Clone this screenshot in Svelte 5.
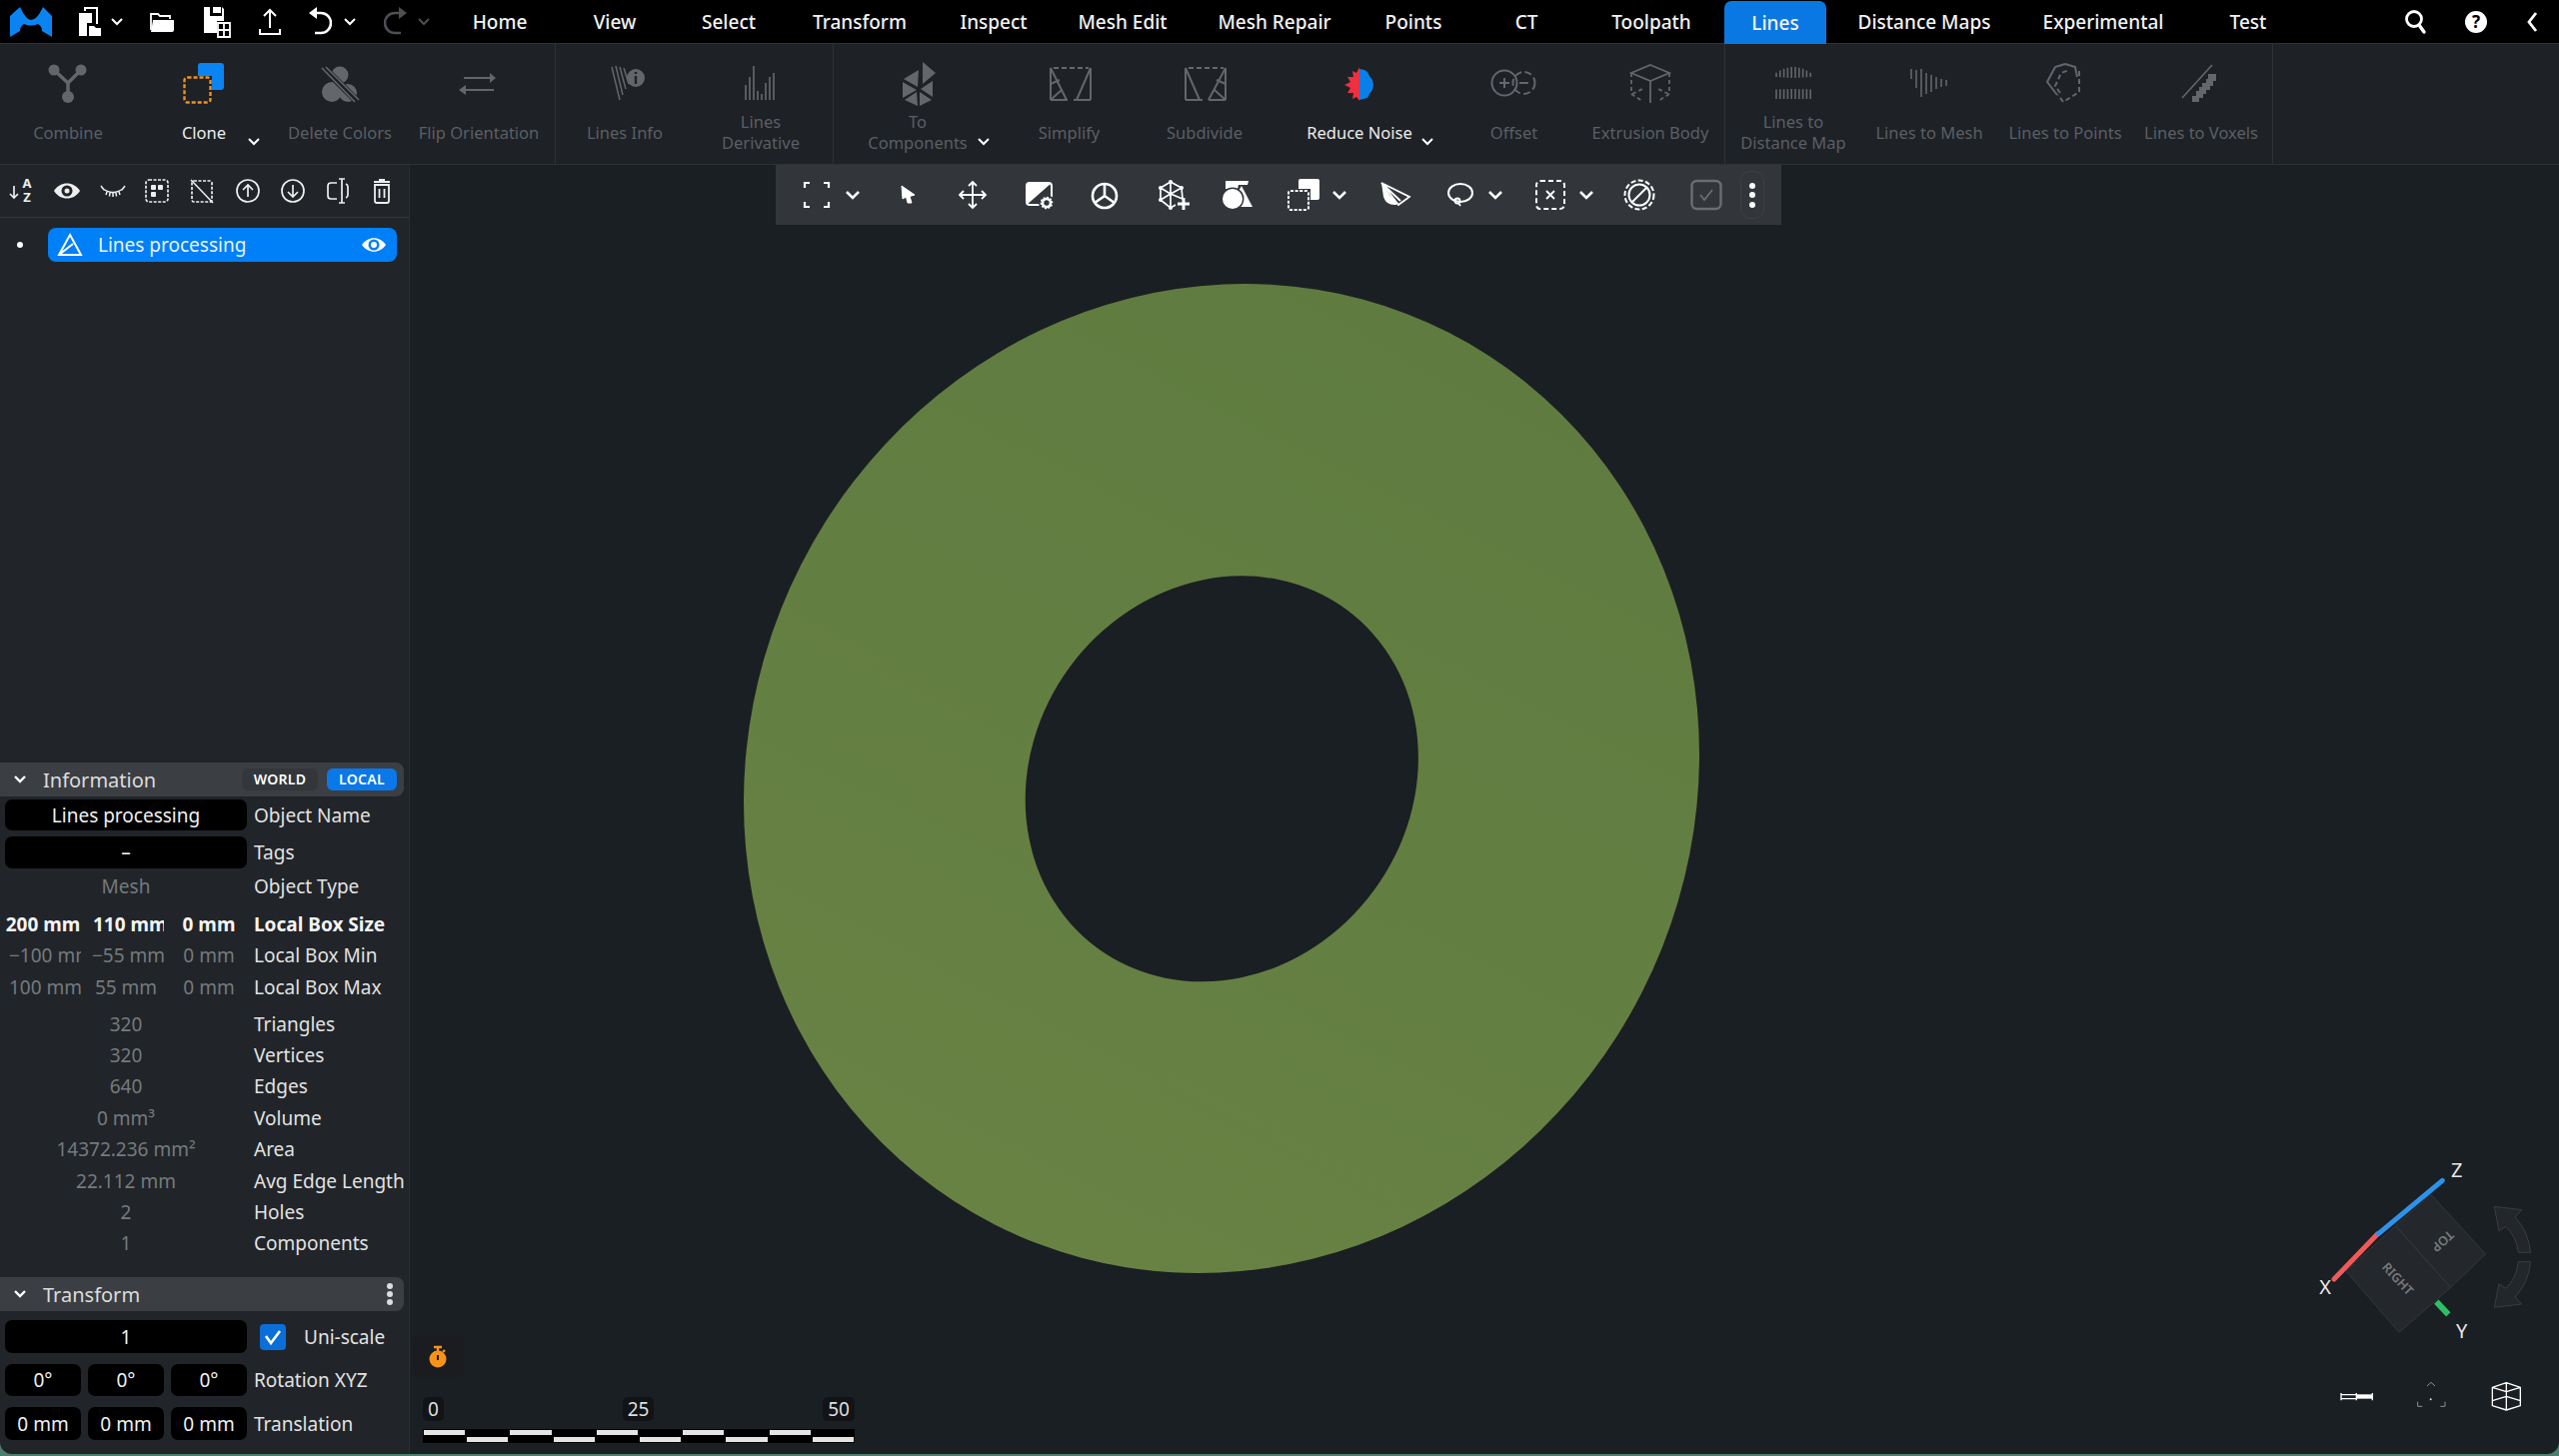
<script>
	// stroke helpers for the hand drawn icons
	const dim = 'stroke="currentColor" fill="none"';
	const distBars = Array.from({ length: 10 }, (_, i) => {
		const x = 7 + i * 3.8;
		const d = Math.abs(i - 4.5);
		return `M${x} ${8 + d * d * 0.28}V${19 - d * 0.2}M${x} ${30 + d * 0.1}V40`;
	}).join('');

	const ribbonIcons = {
		combine: `<path ${dim} stroke-width="3.5" d="M10 11L24 24L37 11M24 24V38"/><circle cx="10" cy="11" r="5.5" fill="currentColor"/><circle cx="37" cy="11" r="5.5" fill="currentColor"/><circle cx="24" cy="38" r="6" fill="currentColor"/>`,
		clone: `<rect x="18" y="4" width="26" height="27" rx="3" fill="#0a84f0"/><rect x="3" y="17" width="29" height="28" fill="#1e2126"/><rect x="4.5" y="18.5" width="26" height="25" rx="3" fill="none" stroke="#f0911e" stroke-width="2.4" stroke-dasharray="4 2"/>`,
		deleteColors: `<circle cx="24" cy="16" r="8.5" fill="currentColor"/><circle cx="16" cy="33" r="10" fill="currentColor"/><circle cx="32" cy="34" r="9" fill="currentColor"/><path stroke="#1e2126" stroke-width="7" d="M8 9L41 42"/><path ${dim} stroke-width="1.6" d="M6 9L39 43M10 8L43 41"/>`,
		flip: `<path ${dim} stroke-width="2" d="M9 19H36M39 31H11"/><path fill="currentColor" d="M35 14L41 19L35 24ZM11 26L4 31L11 36Z"/>`,
		linesInfo: `<path ${dim} stroke-width="1.5" d="M11 8L19 41M15 7L22 36M19 8L25 30M23 9L28 25"/><circle cx="35" cy="19" r="9" fill="currentColor"/><path stroke="#1e2126" stroke-width="2.4" d="M35 17V25M35 13V15"/>`,
		derivative: `<path ${dim} stroke-width="1.7" d="M9 26V41M13 18V41M17 7V41M21 32V41M25 35V41M29 24V41M33 18V41M37 14V41"/>`,
		toComponents: `<g transform="translate(2 0)"><path fill="currentColor" d="M27 3L40 14L27 25ZM23 11L22 28L8 20ZM7 23L21 31L7 39ZM21 33L22 47L9 41ZM24 33L36 41L24 47ZM37 38L25 30L37 22Z"/></g>`,
		simplify: `<path ${dim} stroke-width="2" d="M5 41V9M45 9V41M5 41H22M28 41H45M5 9L21 41M45 9L31 41M5 25L14 21M5 41L16 31"/><path ${dim} stroke-width="2" stroke-dasharray="5 3" d="M8 9H43"/>`,
		subdivide: `<path ${dim} stroke-width="2" d="M5 41V9M45 9V41M5 41H22M28 41H45M5 9L19 41M45 9L28 41M45 25L36 21M45 41L34 31"/><path ${dim} stroke-width="2" stroke-dasharray="5 3" d="M8 9H43"/>`,
		reduceNoise: `<path fill="#ee3040" d="M24 8L21 14L17 12L18 18L12 18L15 23L9 26L15 29L12 34L18 34L17 40L21 38L24 42Z"/><path fill="#0a7fe8" d="M24 10L29 11L32 13L34 17L37 21L38 26L37 31L34 35L32 39L28 40L24 41Z"/>`,
		offset: `<circle cx="14" cy="24" r="12.5" ${dim} stroke-width="2"/><path ${dim} stroke-width="2" d="M9 24H19M14 19V29M29 24H38"/><circle cx="33.5" cy="24" r="11" ${dim} stroke-width="2" stroke-dasharray="7 3.5"/>`,
		extrusion: `<path ${dim} stroke-width="1.8" d="M24 6L43 14L24 22L5 14ZM24 22V44"/><path ${dim} stroke-width="1.8" stroke-dasharray="4 3" d="M5 14V35L16 42M43 14V35L32 42M6 35L18 29M42 35L30 29"/>`,
		distMap: `<path ${dim} stroke-width="1.6" d="${distBars}"/>`,
		linesMesh: `<path ${dim} stroke-width="1.6" d="M6 10V20M11 11V29M16 10V38M21 14V35M26 16V33M31 18V30M36 20V28M41 21V27"/>`,
		linesPoints: `<path ${dim} stroke-width="2" d="M24 5L34 8L36 18M16 36L6 23L14 8L24 5"/><path ${dim} stroke-width="2" stroke-dasharray="5 3" d="M38 12V33L22 43L17 36M19 34L14 27L20 14L28 11"/>`,
		linesVoxels: `<path ${dim} stroke-width="1.6" d="M5 39L35 6"/><path fill="currentColor" d="M34 15h5v7h-3v5h-3v4h-4v4h-3v4h-4v4h-7v-6h4v-5h3v-4h3v-4h4v-4h2v-5h3z"/>`
	};

	const tools = {
		frame: `<path ${dim} stroke-width="2.2" d="M8 13V8H13M27 8H32V13M8 27V32H13M27 32H32V27"/>`,
		cursor: `<path fill="currentColor" stroke="currentColor" stroke-linejoin="round" d="M14 11L27 20L22 21.5L24 28L20 28L18.5 22L15 24Z"/>`,
		move: `<path ${dim} stroke-width="1.8" d="M20 7V33M7 20H33M16 11L20 7L24 11M16 29L20 33L24 29M11 16L7 20L11 24M29 16L33 20L29 24"/>`,
		matGear: `<rect x="8" y="8" width="25" height="22" rx="3" ${dim} stroke-width="2"/><path fill="currentColor" d="M8 11Q8 8 11 8H33L8 30Z"/><circle cx="28" cy="28" r="8" fill="#32363b"/><circle cx="28" cy="28" r="4" ${dim} stroke-width="2.6"/><path ${dim} stroke-width="1.6" stroke-dasharray="2 1.4" d="M28 22.5A5.5 5.5 0 1 1 27.9 22.5"/>`,
		wheel: `<circle cx="20" cy="21" r="12" ${dim} stroke-width="2.6"/><path ${dim} stroke-width="2.6" d="M20 9V21L10 28M20 21L30 28"/>`,
		netAdd: `<path ${dim} stroke-width="1.7" d="M19 7L30 13L31 24M19 7L9 13V25L19 33L24 30M9 13L19 19L30 13M19 7V33M9 25L19 19L31 24"/><g fill="currentColor"><circle cx="19" cy="7" r="2"/><circle cx="30" cy="13" r="2"/><circle cx="9" cy="13" r="2"/><circle cx="9" cy="25" r="2"/><circle cx="19" cy="33" r="2"/></g><path ${dim} stroke-width="3" d="M32 23V35M26 29H38"/>`,
		shapes: `<path fill="currentColor" d="M8 6H31L30 10L21 10L20 14H8Z"/><path fill="currentColor" d="M24 11L35 32H12Z"/><circle cx="15" cy="24" r="11.5" fill="#32363b"/><circle cx="15" cy="24" r="10" fill="currentColor"/>`,
		cloneW: `<rect x="15" y="4" width="21" height="21" rx="2" fill="currentColor"/><rect x="3" y="14" width="24" height="23" fill="#32363b"/><rect x="5" y="16" width="20" height="19" rx="2" ${dim} stroke-width="2" stroke-dasharray="3 1.6"/>`,
		plane: `<path ${dim} stroke-width="1.8" d="M7 8L35 22L24 30ZM7 8L26 26"/><path fill="currentColor" d="M7 8L15 20L22 27L22 30Q12 31 9 22Z"/>`,
		lasso: `<ellipse cx="20" cy="18" rx="12" ry="9" ${dim} stroke-width="2"/><circle cx="17" cy="26" r="2.5" ${dim} stroke-width="1.8"/><path ${dim} stroke-width="1.8" d="M18 28L20 31"/>`,
		xBox: `<rect x="6" y="6" width="28" height="28" rx="4" ${dim} stroke-width="2" stroke-dasharray="5 3"/><path ${dim} stroke-width="1.8" d="M16 16L24 24M24 16L16 24"/>`,
		ban: `<circle cx="20" cy="20" r="14.5" ${dim} stroke-width="2" stroke-dasharray="5 2.4"/><circle cx="20" cy="20" r="10.5" ${dim} stroke-width="2"/><path ${dim} stroke-width="2" d="M13 27L27 13"/>`,
		checkDim: `<rect x="5.5" y="6" width="29" height="28" rx="5" ${dim} stroke-width="2.4"/><path ${dim} stroke-width="1.8" d="M14 20L18 25L26 15"/>`,
		chevron: `<path ${dim} stroke-width="2.6" d="M14 17L20 23L26 17"/>`
	};

	const panelIcons = {
		sort: `<path ${dim} stroke-width="1.7" d="M6 9V21M2 17L6 21L10 17"/><text x="19" y="11" class="mini">A</text><text x="19" y="25" class="mini">Z</text>`,
		eye: `<path fill="currentColor" d="M2 14C8 4 22 4 28 14C22 24 8 24 2 14Z"/><circle cx="15" cy="14" r="5.5" fill="#212529"/><circle cx="15" cy="14" r="2.5" fill="currentColor"/>`,
		eyeClosed: `<path ${dim} stroke-width="1.5" d="M4 11Q15 20 26 11M3 9L6 13M27 9L24 13M9 15L8 18M21 15L22 18M15 16V20M12 16L11.5 19.5M18 16L18.5 19.5"/>`,
		selectDots: `<rect x="4" y="3" width="22" height="22" rx="3" ${dim} stroke-width="1.7" stroke-dasharray="3 1.5"/><rect x="9" y="8" width="5" height="5" rx="1" fill="currentColor"/><rect x="16" y="8" width="5" height="5" rx="1" fill="currentColor"/><rect x="9" y="15" width="5" height="5" rx="1" fill="currentColor"/>`,
		selectNone: `<rect x="5" y="4" width="20" height="21" rx="2" ${dim} stroke-width="1.7" stroke-dasharray="3 1.5"/><path ${dim} stroke-width="1.5" d="M4 3L26 26"/>`,
		up: `<circle cx="15" cy="14" r="11" ${dim} stroke-width="1.7"/><path ${dim} stroke-width="1.7" d="M15 20V8M10 13L15 8L20 13"/>`,
		down: `<circle cx="15" cy="14" r="11" ${dim} stroke-width="1.7"/><path ${dim} stroke-width="1.7" d="M15 8V20M10 15L15 20L20 15"/>`,
		mirror: `<path ${dim} stroke-width="1.7" d="M14 6H8Q5 6 5 9V19Q5 22 8 22H14M19 2V26M16 2H22M16 26H22M23 7Q25 8 25 10V18Q25 20 23 21"/>`,
		trash: `<path ${dim} stroke-width="1.8" d="M8 8H22V24Q22 26 20 26H10Q8 26 8 24ZM7 5H23M12 3H18M12.5 12V21M17.5 12V21"/>`
	};

	const tabs = [
		['Home', 118], ['View', 112], ['Select', 116], ['Transform', 146], ['Inspect', 122],
		['Mesh Edit', 136], ['Mesh Repair', 168], ['Points', 110], ['CT', 116], ['Toolpath', 134],
		['Lines', 102, true], ['Distance Maps', 196], ['Experimental', 162], ['Test', 128]
	];

	const groups = [
		[
			{ label: 'Combine', icon: 'combine', w: 136 },
			{ label: 'Clone', icon: 'clone', w: 136, on: true, more: 111 },
			{ label: 'Delete Colors', icon: 'deleteColors', w: 136 },
			{ label: 'Flip Orientation', icon: 'flip', w: 142 }
		],
		[
			{ label: 'Lines Info', icon: 'linesInfo', w: 138 },
			{ label: 'Lines Derivative', icon: 'derivative', w: 134, wrap: 90 }
		],
		[
			{ label: 'To Components', icon: 'toComponents', w: 168, wrap: 110, more: 143 },
			{ label: 'Simplify', icon: 'simplify', w: 135 },
			{ label: 'Subdivide', icon: 'subdivide', w: 136 },
			{ label: 'Reduce Noise', icon: 'reduceNoise', w: 174, on: true, more: 148 },
			{ label: 'Offset', icon: 'offset', w: 135 },
			{ label: 'Extrusion Body', icon: 'extrusion', w: 138 }
		],
		[
			{ label: 'Lines to Distance Map', icon: 'distMap', w: 136, wrap: 120 },
			{ label: 'Lines to Mesh', icon: 'linesMesh', w: 136 },
			{ label: 'Lines to Points', icon: 'linesPoints', w: 136 },
			{ label: 'Lines to Voxels', icon: 'linesVoxels', w: 136 }
		]
	];

	// turns centre positions into left margins, so the rows stay plain flex rows
	function place(items, start, size) {
		let right = start;
		return items.map((it) => {
			const m = it.x - size / 2 - right;
			right = it.x + size / 2;
			return { ...it, m };
		});
	}

	const toolRow = place(
		[
			{ x: 817, i: 'frame' }, { x: 853, i: 'chevron' }, { x: 908, i: 'cursor' }, { x: 973, i: 'move' },
			{ x: 1039, i: 'matGear' }, { x: 1105, i: 'wheel' }, { x: 1172, i: 'netAdd' }, { x: 1238, i: 'shapes' },
			{ x: 1304, i: 'cloneW' }, { x: 1340, i: 'chevron' }, { x: 1395, i: 'plane' }, { x: 1461, i: 'lasso' },
			{ x: 1496, i: 'chevron' }, { x: 1551, i: 'xBox' }, { x: 1587, i: 'chevron' }, { x: 1640, i: 'ban' },
			{ x: 1707, i: 'checkDim', off: true }
		],
		776,
		40
	);

	const panelRow = place(
		[
			{ x: 23, i: 'sort' }, { x: 67, i: 'eye' }, { x: 113, i: 'eyeClosed' }, { x: 157, i: 'selectDots' },
			{ x: 202, i: 'selectNone' }, { x: 248, i: 'up' }, { x: 293, i: 'down' }, { x: 338, i: 'mirror' }, { x: 382, i: 'trash' }
		],
		0,
		30
	);

	const boxRows = [
		{ vals: ['200 mm', '110 mm', '0 mm'], label: 'Local Box Size', strong: true },
		{ vals: ['−100 mm', '−55 mm', '0 mm'], label: 'Local Box Min' },
		{ vals: ['100 mm', '55 mm', '0 mm'], label: 'Local Box Max' }
	];
	const stats = [
		['320', 'Triangles'], ['320', 'Vertices'], ['640', 'Edges'], ['0 mm³', 'Volume'],
		['14372.236 mm²', 'Area'], ['22.112 mm', 'Avg Edge Length'], ['2', 'Holes'], ['1', 'Components']
	];
	const scaleCells = Array.from({ length: 10 }, (_, i) => i);
</script>

<div class="app">
	<header class="topbar">
		<div class="quick">
			<svg class="logo" width="42" height="30" viewBox="10 5 42 30">
				<path fill="#0b84f3" d="M10 14L20 5Q26 18 31 18Q37 18 43 5L52 14V35L42 29Q42 24 38 22Q31 25 24 22Q20 24 20 29L10 35Z" />
			</svg>
			<svg class="file" width="24" height="32" viewBox="0 0 24 32">
				<path fill="none" stroke="#fff" stroke-width="2" d="M8 5V2H20V18" />
				<path fill="#fff" d="M2 7H15V17H10V30H2Z" />
				<path fill="#fff" d="M12 20H17L19 22H24V30H12Z" />
			</svg>
			<svg class="chev c1" width="14" height="10" viewBox="0 0 14 10"><path fill="none" stroke="#fff" stroke-width="2" d="M2 2L7 7L12 2" /></svg>
			<svg class="folder" width="24" height="22" viewBox="0 0 24 22">
				<path fill="none" stroke="#fff" stroke-width="1.8" d="M1 19V3H8L10 5H20V8" />
				<path fill="#fff" d="M3 9H24V19Q24 21 22 21H1Z" />
			</svg>
			<svg class="save" width="28" height="32" viewBox="0 0 28 32">
				<path fill="#fff" d="M1 1H7V10H19V1L21 3V15H14V27H1Z" />
				<path fill="#fff" d="M10 1H18V7H10Z" />
				<path fill="none" stroke="#fff" stroke-width="1.8" d="M15 17H27V31H15ZM21 17V31M15 24H27" />
			</svg>
			<svg class="upload" width="24" height="30" viewBox="0 0 24 30">
				<path fill="none" stroke="#fff" stroke-width="2" d="M12 21V3M6 9L12 3L18 9M2 22V27H22V22" />
			</svg>
			<svg class="undo" width="24" height="30" viewBox="0 0 24 30">
				<path fill="none" stroke="#fff" stroke-width="2.6" d="M5 6H13A9 9 0 0 1 13 26H7" />
				<path fill="#fff" d="M9 0V12L1 6Z" />
			</svg>
			<svg class="chev c2" width="14" height="10" viewBox="0 0 14 10"><path fill="none" stroke="#fff" stroke-width="2" d="M2 2L7 7L12 2" /></svg>
			<svg class="redo" width="24" height="30" viewBox="0 0 24 30">
				<path fill="none" stroke="#4c4f53" stroke-width="2.6" d="M19 6H11A9 9 0 0 0 11 26H17" />
				<path fill="#4c4f53" d="M15 0V12L23 6Z" />
			</svg>
			<svg class="chev c3" width="14" height="10" viewBox="0 0 14 10"><path fill="none" stroke="#4c4f53" stroke-width="2" d="M2 2L7 7L12 2" /></svg>
		</div>
		<nav class="tabs">
			{#each tabs as [name, w, active]}
				<div class="tab" class:active style="width:{w}px">{name}</div>
			{/each}
		</nav>
		<div class="right">
			<svg width="26" height="28" viewBox="0 0 26 28">
				<circle cx="11" cy="11" r="7.5" fill="none" stroke="#fff" stroke-width="2.8" />
				<path stroke="#fff" stroke-width="3.4" stroke-linecap="round" d="M16 17L21 24" />
			</svg>
			<div class="help">?</div>
			<svg width="14" height="24" viewBox="0 0 14 24">
				<path fill="none" stroke="#fff" stroke-width="2.8" d="M11 3L4 12L11 21" />
			</svg>
		</div>
	</header>

	<section class="ribbon">
		{#each groups as group}
			<div class="group">
				{#each group as item}
					<div class="item" class:on={item.on} style="width:{item.w}px">
						<svg class="r-icon" width="48" height="48" viewBox="0 0 48 48">{@html ribbonIcons[item.icon]}</svg>
						<div class="r-label">
							<span style={item.wrap ? `max-width:${item.wrap}px` : ''}>{item.label}</span>
						</div>
						{#if item.more}
							<svg class="more" style="left:{item.more}px" width="14" height="10" viewBox="0 0 14 10">
								<path fill="none" stroke="#fff" stroke-width="2" d="M2 2L7 7L12 2" />
							</svg>
						{/if}
					</div>
				{/each}
			</div>
		{/each}
	</section>

	<div class="main">
		<aside class="panel">
			<div class="panel-tools">
				{#each panelRow as t}
					<svg style="margin-left:{t.m}px" width="30" height="28" viewBox="0 0 30 28">{@html panelIcons[t.i]}</svg>
				{/each}
			</div>

			<div class="tree">
				<span class="bullet"></span>
				<div class="tree-item">
					<svg width="26" height="26" viewBox="0 0 26 26">
						<path fill="none" stroke="#fff" stroke-width="2" d="M13 3L24 23H2ZM2 23L16 12" />
					</svg>
					<span class="tree-name">Lines processing</span>
					<svg class="tree-eye" width="30" height="28" viewBox="0 0 30 28">
						<path fill="#fff" d="M3 14C9 5 21 5 27 14C21 23 9 23 3 14Z" />
						<circle cx="15" cy="14" r="5.5" fill="#0080f8" />
						<circle cx="15" cy="14" r="3" fill="#fff" />
					</svg>
				</div>
			</div>

			<div class="sec-head">
				<svg class="sec-chev" width="14" height="10" viewBox="0 0 14 10"><path fill="none" stroke="#fff" stroke-width="2.4" d="M2 2L7 7L12 2" /></svg>
				<span class="sec-title">Information</span>
				<span class="pill">WORLD</span>
				<span class="pill blue">LOCAL</span>
			</div>

			<div class="row input-row first">
				<div class="field wide">Lines processing</div>
				<div class="lbl">Object Name</div>
			</div>
			<div class="row input-row tags">
				<div class="field wide">–</div>
				<div class="lbl">Tags</div>
			</div>
			<div class="row stat type">
				<div class="val wide">Mesh</div>
				<div class="lbl">Object Type</div>
			</div>

			<div class="box-rows">
				{#each boxRows as r}
					<div class="row stat" class:strong={r.strong}>
						{#each r.vals as v}<div class="val">{v}</div>{/each}
						<div class="lbl">{r.label}</div>
					</div>
				{/each}
			</div>

			<div class="stats">
				{#each stats as [v, l]}
					<div class="row stat">
						<div class="val wide">{v}</div>
						<div class="lbl">{l}</div>
					</div>
				{/each}
			</div>

			<div class="sec-head transform">
				<svg class="sec-chev" width="14" height="10" viewBox="0 0 14 10"><path fill="none" stroke="#fff" stroke-width="2.4" d="M2 2L7 7L12 2" /></svg>
				<span class="sec-title">Transform</span>
				<svg class="sec-dots" width="8" height="24" viewBox="0 0 8 24">
					<circle cx="4" cy="4" r="3" fill="#ddd" /><circle cx="4" cy="12" r="3" fill="#ddd" /><circle cx="4" cy="20" r="3" fill="#ddd" />
				</svg>
			</div>

			<div class="row xf one">
				<div class="field wide">1</div>
				<div class="check">
					<svg width="20" height="20" viewBox="0 0 20 20"><path fill="none" stroke="#fff" stroke-width="2.6" d="M3 9L8 16L17 4" /></svg>
				</div>
				<div class="lbl uni">Uni-scale</div>
			</div>
			<div class="row xf two">
				<div class="field">0°</div><div class="field">0°</div><div class="field">0°</div>
				<div class="lbl">Rotation XYZ</div>
			</div>
			<div class="row xf three">
				<div class="field">0 mm</div><div class="field">0 mm</div><div class="field">0 mm</div>
				<div class="lbl">Translation</div>
			</div>
		</aside>

		<div class="viewport">
			<svg class="scene" viewBox="410 165 2150 1290">
				<defs>
					<linearGradient id="ringFill" x1="0" y1="0" x2="1" y2="0">
						<stop offset="0" stop-color="#688244" />
						<stop offset="1" stop-color="#5f7b3f" />
					</linearGradient>
					<mask id="ringHole" maskUnits="userSpaceOnUse" x="410" y="165" width="2150" height="1290">
						<rect x="410" y="165" width="2150" height="1290" fill="#fff" />
						<ellipse cx="1222.3" cy="779.3" rx="210.3" ry="188.8" transform="rotate(-53.7 1222.3 779.3)" fill="#000" />
					</mask>
				</defs>
				<g mask="url(#ringHole)">
					<ellipse cx="1222" cy="779" rx="500.8" ry="471.9" transform="rotate(-63 1222 779)" fill="url(#ringFill)" />
				</g>
			</svg>

			<div class="vp-tools">
				{#each toolRow as t}
					<svg class:off={t.off} style="margin-left:{t.m}px" width="40" height="40" viewBox="0 0 40 40">{@html tools[t.i]}</svg>
				{/each}
				<div class="more-pill">
					<span></span><span></span><span></span>
				</div>
			</div>

			<div class="timer">
				<svg width="22" height="24" viewBox="0 0 22 24">
					<path stroke="#f7931a" stroke-width="2.4" d="M7 2H15M11 2V6M18 5L16 7" />
					<circle cx="11" cy="14" r="8.5" fill="#f7931a" />
					<path stroke="#1d2024" stroke-width="2" d="M11 10V15" />
				</svg>
			</div>

			<div class="scalebar">
				<div class="ticks">
					<span>0</span><span class="mid">25</span><span>50</span>
				</div>
				<div class="bar">
					{#each scaleCells as i}
						<span class="seg" class:low={i % 2 === 1}></span>
					{/each}
				</div>
			</div>

			<svg class="gizmo" width="280" height="317" viewBox="0 0 840 951">
				<path fill="#24272b" stroke="#3e4145" stroke-width="2" d="M350 260L515 445L360 580L200 395Z" />
				<path fill="#24272b" stroke="#3e4145" stroke-width="2" d="M350 260L455 165L620 345L515 445Z" />
				<path stroke="#ef5a5a" stroke-width="15" stroke-linecap="round" d="M295 285L165 420" />
				<path stroke="#2d93ea" stroke-width="15" stroke-linecap="round" d="M298 284L490 124" />
				<path stroke="#2fbf62" stroke-width="18" d="M472 488L508 526" />
				<text x="138" y="466" class="axis">X</text>
				<text x="533" y="114" class="axis">Z</text>
				<text x="548" y="596" class="axis">Y</text>
				<text x="355" y="432" class="face" transform="rotate(47 355 420)">RIGHT</text>
				<text x="490" y="317" class="face" transform="rotate(138 490 305)">TOP</text>
				<path fill="#23262a" stroke="#3a3d41" stroke-width="3" d="M755 340H718Q712 290 680 262L660 276L646 202L728 212L708 234Q748 276 755 340Z" />
				<path fill="#23262a" stroke="#3a3d41" stroke-width="3" d="M755 368H718Q712 420 680 448L660 434L646 505L728 495L708 474Q748 432 755 368Z" />
				<path fill="none" stroke="#fff" stroke-width="4" d="M186 762V784M280 762V784M186 767H232M186 779H232M232 762V784" />
				<rect x="232" y="766" width="48" height="13" fill="#fff" />
				<path fill="none" stroke="#8d9094" stroke-width="3" d="M444 741L456 730L468 741M416 788V802H430M498 788V802H484" />
				<circle cx="455" cy="781" r="3" fill="#ddd" />
				<path fill="none" stroke="#fff" stroke-width="4" stroke-linejoin="round" d="M682 731L724 745V800L682 813L640 800V745ZM640 745L682 758L724 745M682 758V813M640 785L682 772L724 785M682 731V772" />
			</svg>
		</div>
	</div>
</div>

<style>
	:global(body) {
		margin: 0;
		background: #4d7d6c;
		font-family: 'Noto Sans', sans-serif;
		overflow: hidden;
	}

	.app {
		width: 2560px;
		height: 1455px;
		display: flex;
		flex-direction: column;
		overflow: hidden;
		border-radius: 0 0 12px 12px;
		color: #fff;
	}

	.topbar {
		height: 43px;
		flex: none;
		display: flex;
		background: #000;
		border-bottom: 1px solid #303338;
	}
	.quick {
		width: 441px;
		flex: none;
		display: flex;
		align-items: center;
	}
	.logo { margin-left: 10px; }
	.file { margin-left: 25px; }
	.c1 { margin-left: 9px; }
	.folder { margin-left: 26px; }
	.save { margin-left: 29px; }
	.upload { margin-left: 27px; }
	.undo { margin-left: 26px; }
	.c2 { margin-left: 11px; }
	.redo { margin-left: 27px; }
	.c3 { margin-left: 9px; }

	.tabs {
		display: flex;
		align-items: stretch;
		width: 1872px;
		flex: none;
	}
	.tab {
		flex: none;
		display: flex;
		align-items: center;
		justify-content: center;
		font-size: 19px;
		font-weight: 500;
		color: #f2f2f2;
	}
	.tab.active {
		background: #0a78e2;
		border-radius: 7px 7px 0 0;
		margin-left: 6px;
		margin-top: 1px;
		margin-bottom: -1px;
	}
	.right {
		flex: 1;
		display: flex;
		align-items: center;
	}
	.right svg:first-child { margin-left: 91px; }
	.help {
		width: 22px;
		height: 22px;
		margin-left: 36px;
		border-radius: 50%;
		background: #fff;
		color: #000;
		font-size: 17px;
		font-weight: 700;
		line-height: 22px;
		text-align: center;
	}
	.right svg:last-child { margin-left: 38px; }

	.ribbon {
		height: 120px;
		flex: none;
		display: flex;
		background: #1e2126;
		border-bottom: 1px solid #2e3135;
	}
	.group {
		display: flex;
		padding-right: 5px;
		border-right: 1px solid #2e3135;
	}
	.group:last-child { padding-right: 3px; }
	.item {
		position: relative;
		flex: none;
		display: flex;
		flex-direction: column;
		align-items: center;
		color: #5b5f64;
		padding-top: 15px;
		box-sizing: border-box;
	}
	.item.on { color: #ececec; }
	.r-icon {
		flex: none;
		color: #63676c;
	}
	.r-label {
		height: 46px;
		margin-top: 2px;
		display: flex;
		align-items: center;
		justify-content: center;
		text-align: center;
		font-size: 16.5px;
		line-height: 21px;
	}
	.r-label span { display: block; }
	.more {
		position: absolute;
		top: 93px;
	}

	.main {
		flex: 1;
		display: flex;
		min-height: 0;
	}

	.panel {
		width: 410px;
		flex: none;
		display: flex;
		flex-direction: column;
		background: #212529;
		border-right: 1px solid #2a2e32;
		box-sizing: border-box;
		font-size: 19px;
	}
	.panel-tools {
		height: 52px;
		flex: none;
		display: flex;
		align-items: center;
		border-bottom: 1px solid #34373b;
		color: #eee;
	}
	.panel-tools svg { overflow: visible; }
	.tree {
		flex: 1;
		display: flex;
		align-items: flex-start;
		padding-top: 10px;
		min-height: 0;
	}
	.bullet {
		width: 6px;
		height: 6px;
		margin: 14px 0 0 17px;
		border-radius: 50%;
		background: #fff;
	}
	.tree-item {
		margin-left: 25px;
		width: 349px;
		height: 34px;
		display: flex;
		align-items: center;
		background: #0080f8;
		border-radius: 8px;
		padding-left: 9px;
		box-sizing: border-box;
	}
	.tree-name {
		margin-left: 15px;
		flex: 1;
		color: #e8f3ff;
	}
	.tree-eye { margin-right: 8px; }

	.sec-head {
		width: 404px;
		height: 34px;
		flex: none;
		display: flex;
		align-items: center;
		background: #3b3f43;
		border-radius: 0 8px 8px 0;
	}
	.sec-chev { margin-left: 13px; }
	.sec-title {
		margin-left: 16px;
		flex: 1;
		font-size: 20px;
		color: #dcdcdc;
	}
	.pill {
		height: 22px;
		line-height: 22px;
		width: 76px;
		text-align: center;
		font-size: 14px;
		font-weight: 600;
		background: #33373b;
		border-radius: 6px;
		margin-right: 9px;
		letter-spacing: 0.3px;
	}
	.pill.blue {
		width: 70px;
		background: #0a78e8;
		margin-right: 7px;
	}
	.sec-dots { margin-right: 10px; }

	.row {
		display: flex;
		align-items: center;
		flex: none;
		padding-left: 5px;
		gap: 7px;
	}
	.lbl {
		white-space: nowrap;
		color: #e2e2e2;
	}
	.field, .val {
		width: 76px;
		flex: none;
		text-align: center;
		white-space: nowrap;
		overflow: hidden;
		padding: 0 4px;
		box-sizing: border-box;
	}
	.wide { width: 242px; }
	.field {
		height: 100%;
		display: flex;
		align-items: center;
		justify-content: center;
		background: #000;
		border-radius: 7px;
		color: #f0f0f0;
	}
	.val { color: #757a7d; }
	.input-row.first { height: 31px; margin-top: 3px; }
	.input-row.tags { height: 32px; margin-top: 6px; }
	.stat { height: 31.4px; }
	.stat.type { margin-top: 2px; height: 32px; }
	.box-rows { margin-top: 6px; }
	.stats { margin-top: 5.5px; }
	.strong .val, .strong .lbl {
		color: #f4f4f4;
		font-weight: 700;
	}
	.strong .val:nth-child(1) { padding: 0; }
	.strong .val:nth-child(2) {
		padding: 0 0 0 5px;
		text-align: left;
	}
	.transform { margin-top: 18px; }
	.xf.one { height: 33px; margin-top: 9px; }
	.xf.two { height: 32px; margin-top: 11px; }
	.xf.three { height: 33px; margin-top: 11px; margin-bottom: 14px; }
	.check {
		width: 26px;
		height: 26px;
		margin-left: 6px;
		display: flex;
		align-items: center;
		justify-content: center;
		background: #0a6fd8;
		border-radius: 4px;
	}
	.lbl.uni { margin-left: 11px; }

	.viewport {
		position: relative;
		flex: 1;
		background: #1a1f23;
		overflow: hidden;
	}
	.scene {
		position: absolute;
		left: 0;
		top: 0;
		width: 2150px;
		height: 1290px;
	}
	.vp-tools {
		position: absolute;
		left: 366px;
		top: 0;
		width: 1006px;
		height: 60px;
		display: flex;
		align-items: center;
		background: #32363b;
		color: #fff;
	}
	.vp-tools svg { flex: none; }
	.vp-tools .off { color: #6a6e72; }
	.more-pill {
		width: 24px;
		height: 48px;
		margin-left: 14px;
		display: flex;
		flex-direction: column;
		align-items: center;
		justify-content: center;
		gap: 3.5px;
		border: 1px solid #3c4045;
		border-radius: 10px;
		box-sizing: border-box;
	}
	.more-pill span {
		width: 6px;
		height: 6px;
		border-radius: 50%;
		background: #fff;
	}
	.timer {
		position: absolute;
		left: 2px;
		top: 1172px;
		width: 52px;
		height: 41px;
		display: flex;
		align-items: center;
		justify-content: center;
		background: #1a1c20;
		border-radius: 6px;
	}
	.scalebar {
		position: absolute;
		left: 13px;
		top: 1233px;
		width: 432px;
	}
	.ticks {
		display: flex;
		justify-content: space-between;
		height: 24px;
		font-size: 19px;
		line-height: 24px;
		color: #dedede;
	}
	.ticks span {
		background: #111316;
		border-radius: 5px;
		padding: 0 5px;
	}
	.ticks .mid { margin-left: 10px; }
	.bar {
		margin-top: 8px;
		height: 14px;
		display: flex;
		background: #000;
		padding: 1px 0;
		box-sizing: border-box;
	}
	.seg {
		flex: 1;
		height: 5px;
		margin: 0 1px;
		background: #e4e4e4;
	}
	.seg.low { margin-top: 7px; }
	.gizmo {
		position: absolute;
		right: 0;
		bottom: -2px;
	}
	.gizmo .axis {
		font-family: 'Noto Sans', sans-serif;
		font-size: 60px;
		fill: #e8e8e8;
		text-anchor: middle;
	}
	.gizmo .face {
		font-family: 'Noto Sans', sans-serif;
		font-size: 38px;
		font-weight: 600;
		fill: #777a7e;
		text-anchor: middle;
	}
	.panel-tools :global(.mini) {
		font-family: 'Noto Sans', sans-serif;
		font-size: 13px;
		font-weight: 700;
		fill: #eee;
		text-anchor: middle;
	}
</style>
